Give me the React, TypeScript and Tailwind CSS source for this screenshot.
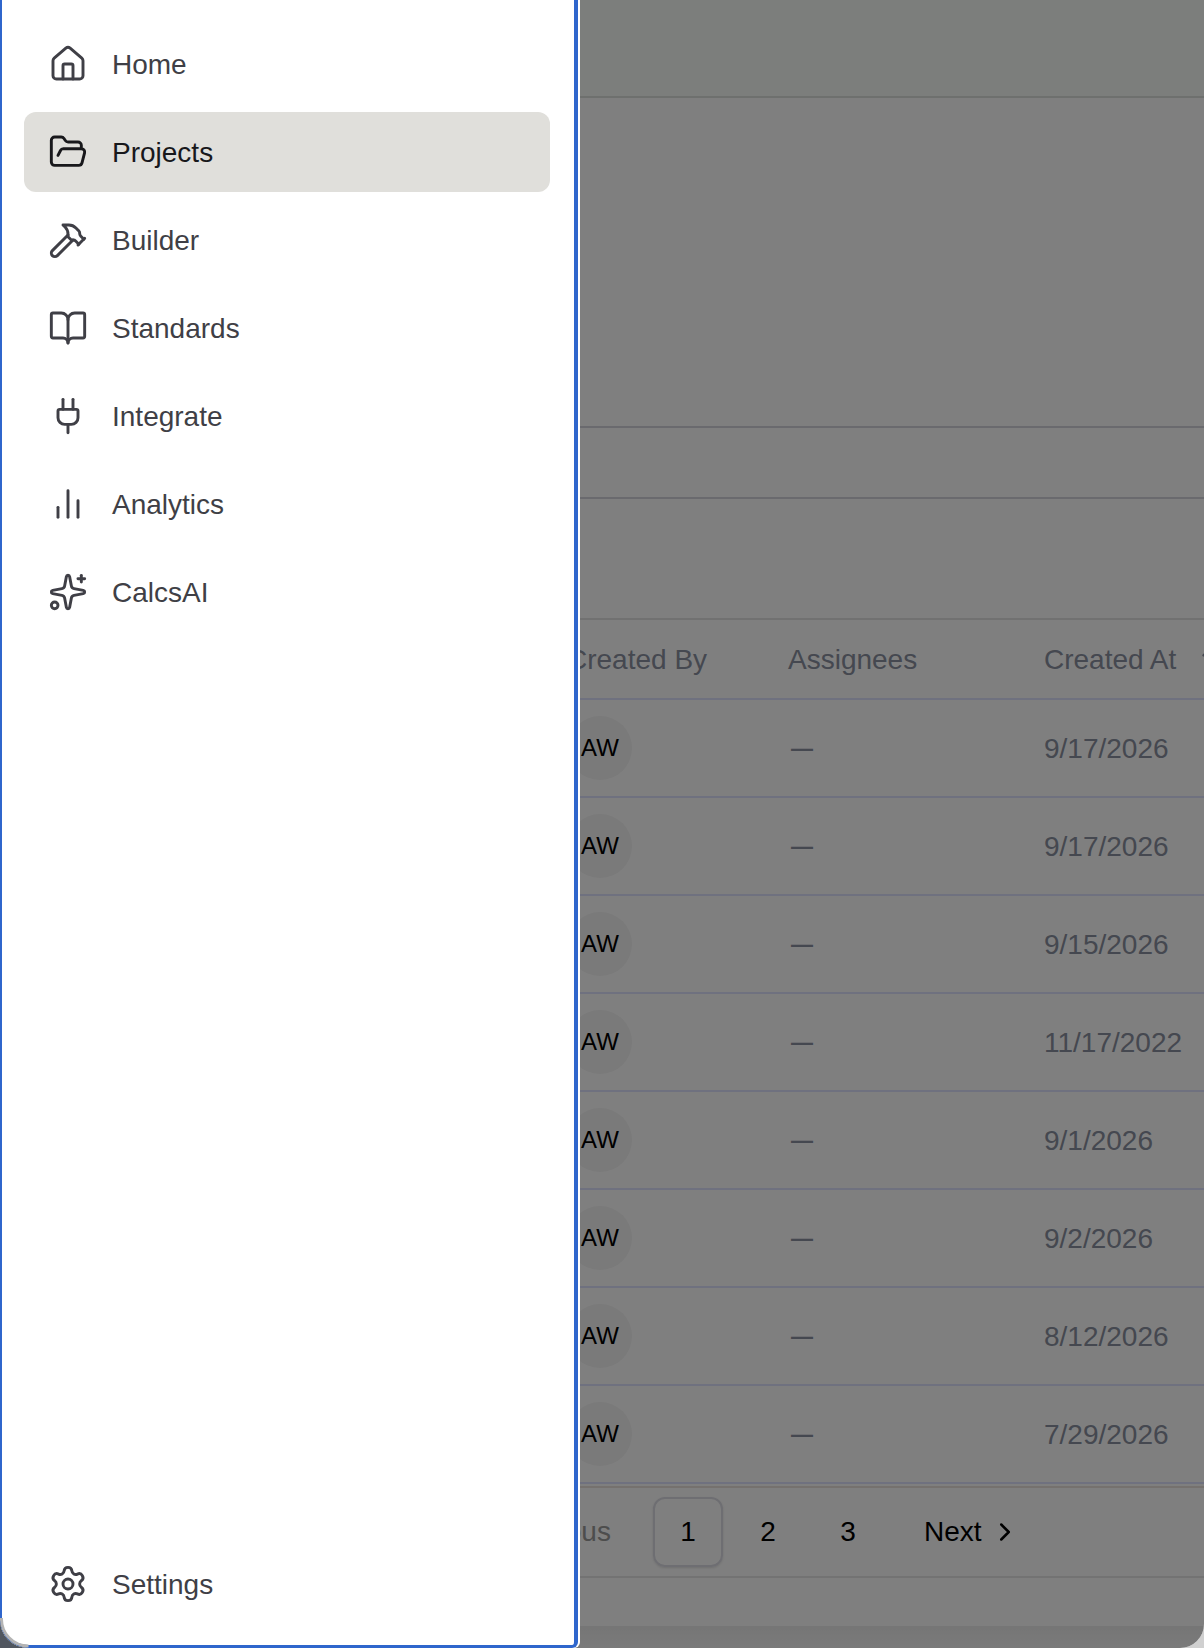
import { ArrowUpDown, BookOpen, ChevronLeft, ChevronRight, FolderOpen, Hammer, House, Plug, Settings, Sparkles } from 'lucide-react';

function BarsIcon({ size, strokeWidth }: { size?: number; strokeWidth?: number }) {
  return (
    <svg width={size} height={size} viewBox="0 0 24 24" fill="none" stroke="currentColor" strokeWidth={strokeWidth} strokeLinecap="round" strokeLinejoin="round">
      <path d="M18 20V10" />
      <path d="M12 20V4" />
      <path d="M6 20v-6" />
    </svg>
  );
}

const navItems = [
  { label: 'Home', icon: House },
  { label: 'Projects', icon: FolderOpen, active: true },
  { label: 'Builder', icon: Hammer },
  { label: 'Standards', icon: BookOpen },
  { label: 'Integrate', icon: Plug },
  { label: 'Analytics', icon: BarsIcon },
  { label: 'CalcsAI', icon: Sparkles },
];

const dates = ['9/17/2026', '9/17/2026', '9/15/2026', '11/17/2022', '9/1/2026', '9/2/2026', '8/12/2026', '7/29/2026'];

function NavItem({ label, icon: Icon, active }: { label: string; icon: React.ElementType; active?: boolean }) {
  return (
    <a className={`flex h-20 items-center gap-6 rounded-xl px-6 text-[28px] ${active ? 'bg-[#e0dfdb] text-[#18181b]' : 'text-[#3f3f46]'}`}>
      <Icon size={40} strokeWidth={1.75} />
      <span className="pt-0.5">{label}</span>
    </a>
  );
}

function ProjectsTable() {
  return (
    <div className="text-[28px]">
      <div className="grid h-20 grid-cols-[567px_221px_256px_1fr] items-center border-b-2 border-[#dee2ff] text-[#8a90a0]">
        <span />
        <span className="pt-0.5">Created By</span>
        <span className="pt-0.5">Assignees</span>
        <span className="flex items-center gap-6 whitespace-nowrap pt-0.5">
          Created At
          <ArrowUpDown size={28} className="shrink-0" />
        </span>
      </div>
      {dates.map((date, i) => (
        <div key={i} className="grid h-[98px] grid-cols-[568px_221px_255px_1fr] items-center border-b-2 border-[#dee2ff]">
          <span />
          <span className="flex h-16 w-16 items-center justify-center rounded-full bg-[#f4f4f4] text-2xl text-black">AW</span>
          <span className="pl-0.5 text-[22px] font-bold text-[#8a90a0]">—</span>
          <span className="pt-0.5 text-[#8a90a0]">{date}</span>
        </div>
      ))}
    </div>
  );
}

function Pagination() {
  return (
    <div className="mt-0.5 flex h-[92px] items-center gap-2.5 border-y-2 border-t-[#eae2dc] border-b-[#e6e6e6] pl-[474px] text-[28px] text-black">
      <span className="flex items-center gap-2 px-8 text-[#9a9a9a]">
        <ChevronLeft size={28} className="-ml-10" />
        Previous
      </span>
      <span className="flex h-[70px] w-[70px] items-center justify-center rounded-xl border-2 border-[#dcdce4] shadow-sm">1</span>
      <span className="flex h-[70px] w-[70px] items-center justify-center">2</span>
      <span className="flex h-[70px] w-[70px] items-center justify-center">3</span>
      <span className="flex items-center gap-2 px-[31px]">
        Next
        <ChevronRight size={30} strokeWidth={2} />
      </span>
    </div>
  );
}

export default function App() {
  return (
    <div className="h-[1648px] w-[1204px] bg-[linear-gradient(to_right,#50565f_50%,#d0d0d0_50%)] font-['Liberation_Sans',Arial,sans-serif]">
      <div className="relative h-full overflow-hidden rounded-br-3xl rounded-bl-[28px] bg-white">
        <div className="h-[98px] border-b-2 border-[#dde0dd] bg-[#f8fcf8]" />
        <div className="h-[330px] border-b-2 border-[#d4d4dc]" />
        <div className="h-[71px] border-b-2 border-[#d4d4dc]" />
        <div className="h-[121px] border-b-2 border-[#e2e2e2]" />
        <ProjectsTable />
        <Pagination />
        <div className="mt-12 h-[30px] bg-gradient-to-b from-[#ececec] to-[#f8f8f8]" />

        <div className="absolute inset-0 bg-black/50" />

        <aside className="absolute inset-y-0 left-0 flex w-[578px] flex-col rounded-br-md rounded-bl-[28px] border-b-[3px] border-l-2 border-r-4 border-[#2f66cc] bg-white pt-6 pr-6 pb-[21px] pl-[22px] shadow-[2px_0_0_#fff]">
          <nav className="flex flex-col gap-2">
            {navItems.map((item) => (
              <NavItem key={item.label} {...item} />
            ))}
          </nav>
          <div className="mt-auto">
            <NavItem label="Settings" icon={Settings} />
          </div>
        </aside>

        {/* window corner drawn over the drawer's border */}
        <svg className="absolute bottom-0 left-0" width="30" height="30" viewBox="0 0 30 30" fill="none">
          <path d="M1.5 0A27 27 0 0 0 28.5 28" stroke="#b4b4b4" strokeWidth="3" />
        </svg>
      </div>
    </div>
  );
}
